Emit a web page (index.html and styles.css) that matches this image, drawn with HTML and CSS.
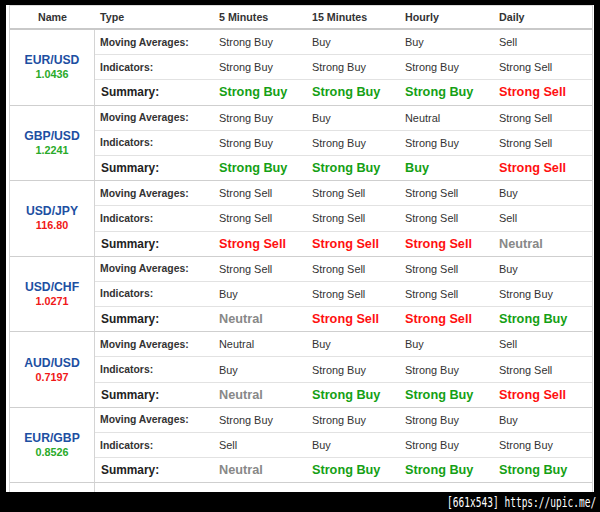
FILE: index.html
```html
<!DOCTYPE html>
<html>
<head>
<meta charset="utf-8">
<link rel="stylesheet" href="styles.css">
</head>
<body>
<div class="frame">
<table class="tech">
  <colgroup>
    <col class="c-name"><col class="c-type"><col class="c-5m"><col class="c-15m"><col class="c-h"><col class="c-d">
  </colgroup>
  <thead>
    <tr><th class="h-name">Name</th><th>Type</th><th>5 Minutes</th><th>15 Minutes</th><th>Hourly</th><th>Daily</th></tr>
  </thead>
  <tbody>
    <tr><td class="name" rowspan="3"><div class="pair">EUR/USD</div><div class="price up">1.0436</div></td><td class="label">Moving Averages:</td><td>Strong Buy</td><td>Buy</td><td>Buy</td><td>Sell</td></tr>
    <tr><td class="label">Indicators:</td><td>Strong Buy</td><td>Strong Buy</td><td>Strong Buy</td><td>Strong Sell</td></tr>
    <tr class="sum"><td class="label">Summary:</td><td class="g">Strong Buy</td><td class="g">Strong Buy</td><td class="g">Strong Buy</td><td class="r">Strong Sell</td></tr>

    <tr><td class="name" rowspan="3"><div class="pair">GBP/USD</div><div class="price up">1.2241</div></td><td class="label">Moving Averages:</td><td>Strong Buy</td><td>Buy</td><td>Neutral</td><td>Strong Sell</td></tr>
    <tr><td class="label">Indicators:</td><td>Strong Buy</td><td>Strong Buy</td><td>Strong Buy</td><td>Strong Sell</td></tr>
    <tr class="sum"><td class="label">Summary:</td><td class="g">Strong Buy</td><td class="g">Strong Buy</td><td class="g">Buy</td><td class="r">Strong Sell</td></tr>

    <tr><td class="name" rowspan="3"><div class="pair">USD/JPY</div><div class="price down">116.80</div></td><td class="label">Moving Averages:</td><td>Strong Sell</td><td>Strong Sell</td><td>Strong Sell</td><td>Buy</td></tr>
    <tr><td class="label">Indicators:</td><td>Strong Sell</td><td>Strong Sell</td><td>Strong Sell</td><td>Sell</td></tr>
    <tr class="sum"><td class="label">Summary:</td><td class="r">Strong Sell</td><td class="r">Strong Sell</td><td class="r">Strong Sell</td><td class="n">Neutral</td></tr>

    <tr><td class="name" rowspan="3"><div class="pair">USD/CHF</div><div class="price down">1.0271</div></td><td class="label">Moving Averages:</td><td>Strong Sell</td><td>Strong Sell</td><td>Strong Sell</td><td>Buy</td></tr>
    <tr><td class="label">Indicators:</td><td>Buy</td><td>Strong Sell</td><td>Strong Sell</td><td>Strong Buy</td></tr>
    <tr class="sum"><td class="label">Summary:</td><td class="n">Neutral</td><td class="r">Strong Sell</td><td class="r">Strong Sell</td><td class="g">Strong Buy</td></tr>

    <tr><td class="name" rowspan="3"><div class="pair">AUD/USD</div><div class="price down">0.7197</div></td><td class="label">Moving Averages:</td><td>Neutral</td><td>Buy</td><td>Buy</td><td>Sell</td></tr>
    <tr><td class="label">Indicators:</td><td>Buy</td><td>Strong Buy</td><td>Strong Buy</td><td>Strong Sell</td></tr>
    <tr class="sum"><td class="label">Summary:</td><td class="n">Neutral</td><td class="g">Strong Buy</td><td class="g">Strong Buy</td><td class="r">Strong Sell</td></tr>

    <tr><td class="name" rowspan="3"><div class="pair">EUR/GBP</div><div class="price up">0.8526</div></td><td class="label">Moving Averages:</td><td>Strong Buy</td><td>Strong Buy</td><td>Strong Buy</td><td>Buy</td></tr>
    <tr><td class="label">Indicators:</td><td>Sell</td><td>Buy</td><td>Strong Buy</td><td>Strong Buy</td></tr>
    <tr class="sum"><td class="label">Summary:</td><td class="n">Neutral</td><td class="g">Strong Buy</td><td class="g">Strong Buy</td><td class="g">Strong Buy</td></tr>

    <tr class="tail"><td class="name"></td><td></td><td></td><td></td><td></td><td></td></tr>
  </tbody>
</table>
</div>
<div class="stamp"><span class="stamp-text">[661x543] https://upic.me/</span></div>
</body>
</html>
```
FILE: styles.css
```css
html, body {
  margin: 0;
  padding: 0;
  background: #000;
}

body {
  width: 600px;
  height: 512px;
  overflow: hidden;
  font-family: "Liberation Sans", Arial, sans-serif;
}

.frame {
  margin: 5px 6px 0 6px;
  padding-left: 3px;
  padding-right: 1px;
  height: 487px;
  background: #fff;
  overflow: hidden;
}

.tech {
  width: 584px;
  table-layout: fixed;
  border-collapse: separate;
  border-spacing: 0;
  border-top: 1px solid #dcdcdc;
  border-left: 1px solid #d4d4d4;
  border-right: 1px solid #d4d4d4;
  color: #333;
}

.c-name { width: 85px; }
.c-type { width: 119px; }
.c-5m { width: 93px; }
.c-15m { width: 93px; }
.c-h { width: 94px; }
.c-d { width: 98px; }

.tech th,
.tech td {
  box-sizing: border-box;
  padding: 0 0 0 5px;
  text-align: left;
  vertical-align: middle;
  white-space: nowrap;
}

.tech th {
  height: 24px;
  font-size: 10.7px;
  font-weight: bold;
  color: #333;
  border-bottom: 2px solid #c9c9c9;
}

.tech th.h-name {
  text-align: center;
  padding: 0;
}

.tech td {
  height: 25.2px;
  font-size: 10.9px;
  border-bottom: 1px solid #e2e2e2;
}

.tech tr.sum td {
  border-bottom-color: #cfcfcf;
}

.tech td.name {
  padding: 0;
  text-align: center;
  border-right: 1px solid #d4d4d4;
  border-bottom: 1px solid #cfcfcf;
}

.pair {
  font-size: 12.2px;
  font-weight: bold;
  line-height: 14px;
  color: #1d4fa2;
}

.price {
  font-size: 10.8px;
  font-weight: bold;
  line-height: 14px;
}

.price.up { color: #2aaa2a; }
.price.down { color: #f01818; }

.tech td.label {
  font-size: 10.4px;
  font-weight: bold;
  color: #333;
}

.tech tr.sum td {
  font-size: 12.7px;
  font-weight: bold;
}

.tech tr.sum td.label {
  font-size: 11.9px;
  padding-left: 6px;
  color: #222;
}

.tech td.g { color: #14a014; }
.tech td.r { color: #ff1010; }
.tech td.n { color: #888; }

.tech tr.tail td {
  height: 20px;
  border-bottom: none;
}

.stamp {
  height: 20px;
  background: #000;
  text-align: right;
  padding-right: 4px;
  line-height: 20px;
}

.stamp-text {
  display: inline-block;
  color: #fff;
  font-family: "DejaVu Sans Mono", monospace;
  font-size: 13.3px;
  transform: scaleX(0.716);
  transform-origin: right center;
}
```
